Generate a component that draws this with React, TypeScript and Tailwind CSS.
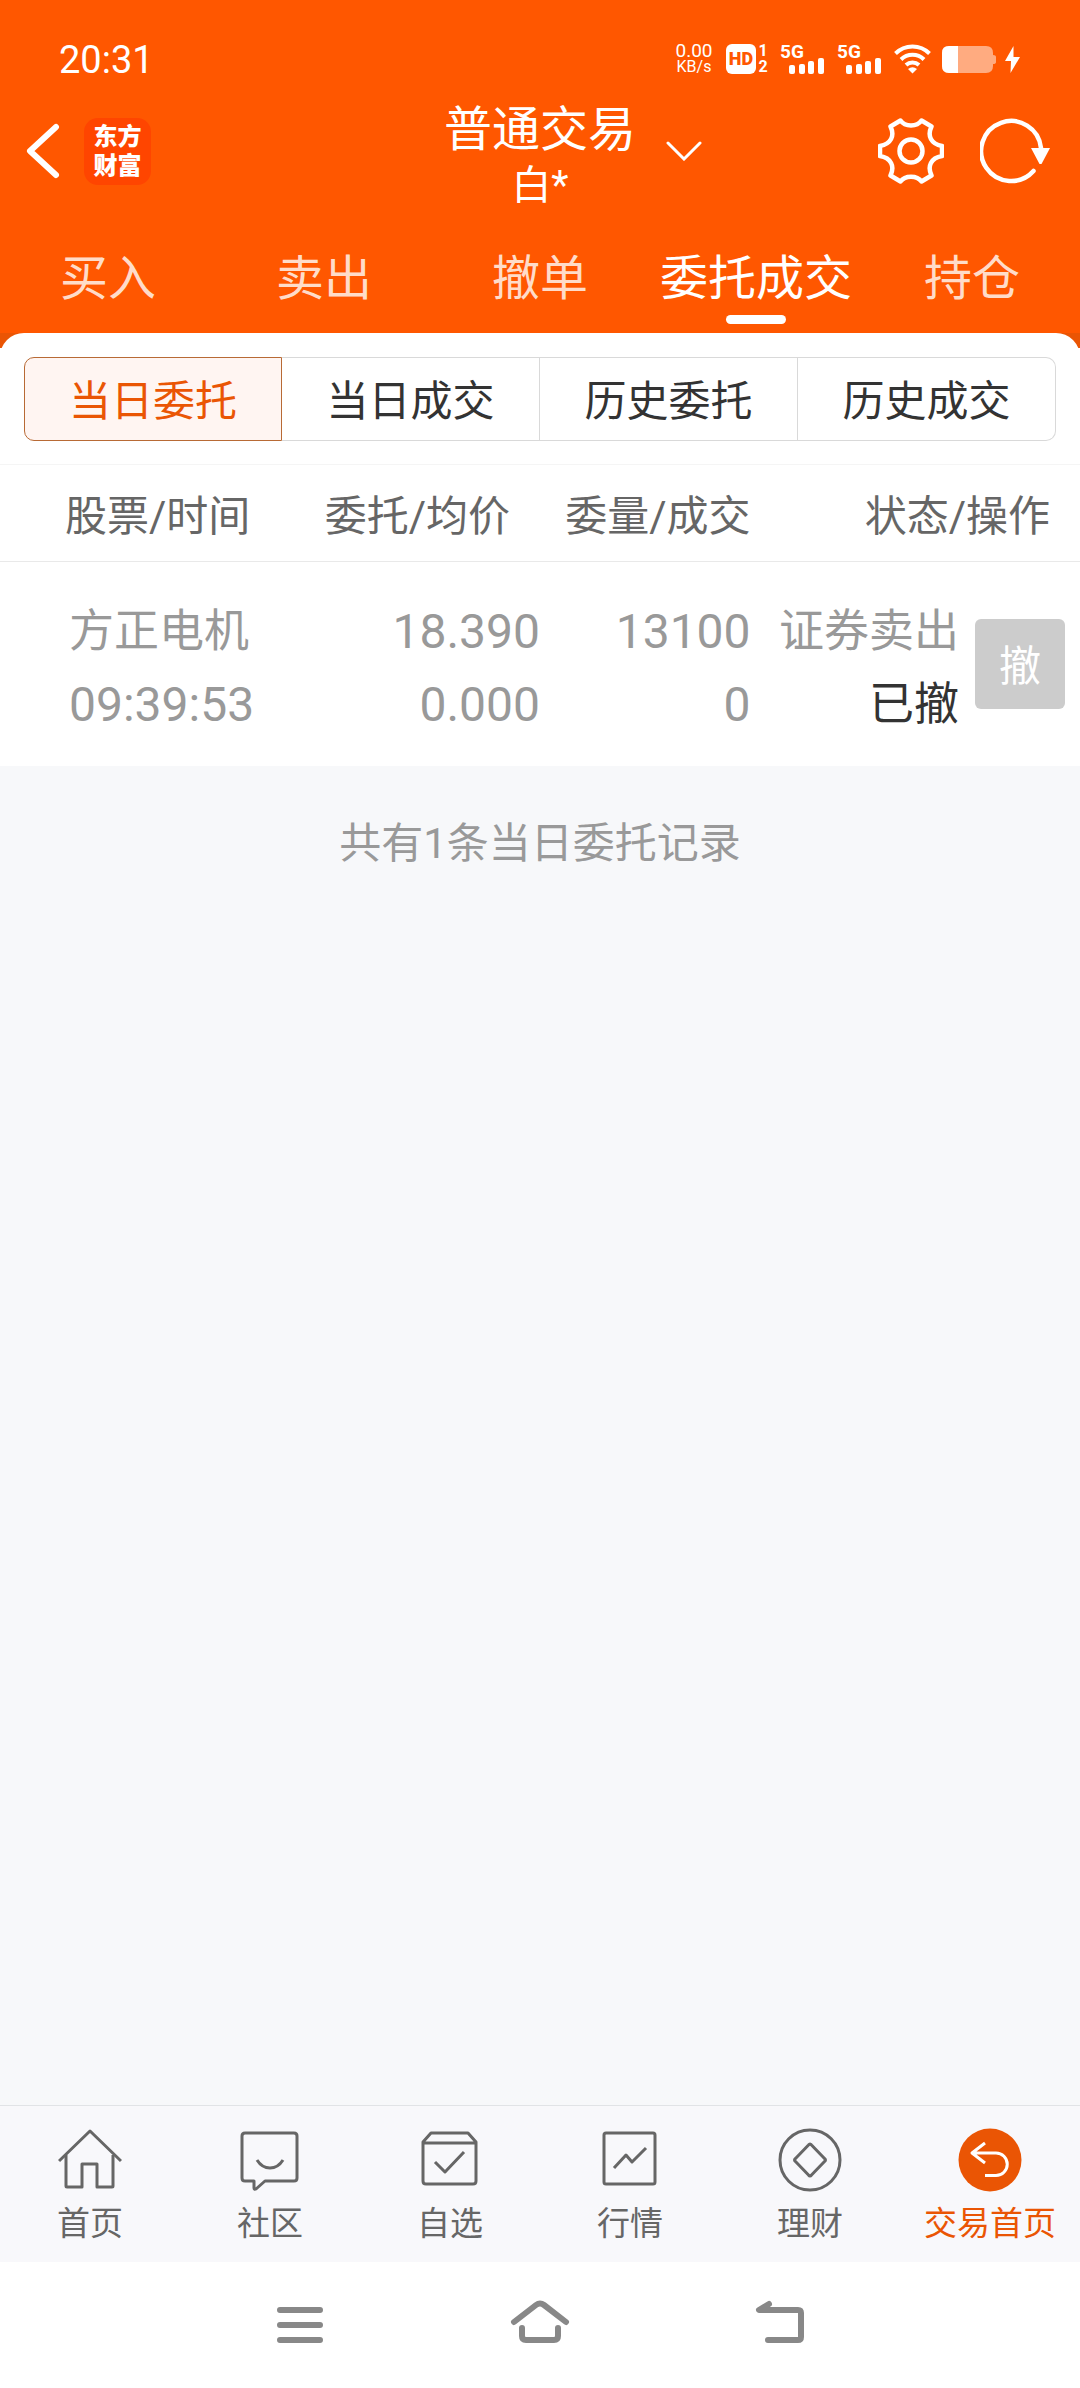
import React, { useState } from "react";
import clsx from "clsx";

interface NavItem {
  readonly label: string;
  readonly icon: React.ReactNode;
  readonly active?: boolean;
}

const TABS = ["买入", "卖出", "撤单", "委托成交", "持仓"];

const SEGMENTS = ["当日委托", "当日成交", "历史委托", "历史成交"];

const ORDERS = [
  {
    name: "方正电机",
    time: "09:39:53",
    price: "18.390",
    avg: "0.000",
    amount: "13100",
    filled: "0",
    side: "证券卖出",
    status: "已撤",
  },
];

const NAV_ITEMS: NavItem[] = [
  {
    label: "首页",
    icon: (
      <>
        <path d="M1 33 32 3l31 30" />
        <path d="M8 27v31q0 1 1 1h15V36h15v23h15q1 0 1-1V27" />
      </>
    ),
  },
  {
    label: "社区",
    icon: (
      <>
        <path d="M7 5h49q3 0 3 3v42q0 3-3 3H27l-9 8q-2 1-2-1v-7H7q-3 0-3-3V8q0-3 3-3z" />
        <path d="M19 32q5 8 13 8t13-8" />
      </>
    ),
  },
  {
    label: "自选",
    icon: (
      <>
        <path d="M5 14l8-9h37l8 9v39q0 3-3 3H8q-3 0-3-3zM5 15h53" />
        <path d="M17 34l10 10 19-20" />
      </>
    ),
  },
  {
    label: "行情",
    icon: (
      <>
        <rect x="6" y="5" width="51" height="51" rx="2" />
        <path d="M16 40l12-13 6 7 14-14" />
      </>
    ),
  },
  {
    label: "理财",
    icon: (
      <>
        <circle cx="32" cy="32" r="30" />
        <path d="M30.500 17q1.500-2 3 0l13 13.500q2 1.500 0 3l-13 13.500q-1.500 2-3 0l-13-13.500q-2-1.500 0-3z" />
      </>
    ),
  },
  {
    label: "交易首页",
    active: true,
    icon: (
      <>
        <circle cx="32" cy="32" r="31.500" fill="#ea5504" stroke="none" />
        <path
          d="M27 15 14 25l13 10M14 25h24a11 11 0 0 1 0 22.500H27"
          stroke="#fff"
          strokeLinecap="butt"
        />
      </>
    ),
  },
];

const Signal = () => (
  <div className="w-[45px] h-[30px] relative">
    <span className="block text-[19px] leading-4 font-bold">5G</span>
    <svg
      className="absolute right-0 bottom-0 w-9 h-4"
      viewBox="0 0 36 16"
      fill="currentColor"
      aria-hidden="true"
    >
      <rect x="0" y="7" width="6" height="9" rx="2" />
      <rect x="10" y="6" width="6" height="10" rx="2" />
      <rect x="19" y="3" width="6" height="13" rx="2" />
      <rect x="29" y="0" width="6" height="16" rx="2" />
    </svg>
  </div>
);

const StatusBar = () => (
  <div className="h-[99px] pt-[19px] pl-[59px] pr-[60px] flex items-center justify-between">
    <span className="pt-[2px] text-[38px] leading-10">20:31</span>
    <div className="flex items-center">
      <div className="w-10 flex flex-col items-center text-[19px] leading-4">
        <span>0.00</span>
        <span className="text-[16px]">KB/s</span>
      </div>
      <div className="ml-3 w-[30px] h-[30px] rounded-md bg-white text-[#ff5700] text-[18px] leading-[30px] font-black text-center">
        HD
      </div>
      <div className="ml-[2px] w-[10px] flex flex-col items-center text-[16px] leading-4 font-bold">
        <span>1</span>
        <span>2</span>
      </div>
      <div className="ml-3 flex gap-3">
        <Signal />
        <Signal />
      </div>
      <svg
        className="ml-3 w-[37px] h-[30px]"
        viewBox="0 0 37 30"
        fill="none"
        stroke="currentColor"
        strokeWidth="4"
        aria-hidden="true"
      >
        <path d="M1.500 9.500a24 24 0 0 1 34 0" />
        <path d="M7 15.500a16.500 16.500 0 0 1 23 0" />
        <path d="M12 21a9.500 9.500 0 0 1 13 0" />
        <path d="M18.500 29.500l-4.500-4.500q4.500-3.500 9 0z" fill="currentColor" stroke="none" />
      </svg>
      <svg className="ml-[11px] w-[54px] h-[27px]" viewBox="0 0 54 27" aria-hidden="true">
        <path
          d="M7 0h37q7 0 7 7v2q3 0 3 2v5q0 2-3 2v2q0 7-7 7H7q-7 0-7-7V7q0-7 7-7z"
          fill="#ffab80"
        />
        <path d="M16 0H7Q0 0 0 7v13q0 7 7 7h9z" fill="#fff" />
      </svg>
      <svg
        className="ml-[9px] w-[15px] h-[27px]"
        viewBox="0 0 15 27"
        fill="currentColor"
        aria-hidden="true"
      >
        <path d="M8.500 0 0 15h6l-.5 12L15 11H8.500z" />
      </svg>
    </div>
  </div>
);

const TitleBar = () => (
  <div className="grid grid-cols-[1fr_auto_1fr] items-start">
    <div className="h-[104px] pl-[26px] flex items-center">
      <button aria-label="返回">
        <svg
          className="w-[34px] h-[56px]"
          viewBox="0 0 34 56"
          fill="none"
          stroke="currentColor"
          strokeWidth="6"
          strokeLinecap="round"
          strokeLinejoin="round"
        >
          <path d="M30 4 4 28l26 24" />
        </svg>
      </button>
      <a
        href="#app"
        className="ml-6 w-[67px] h-[67px] pt-[2px] rounded-[14px] bg-[#ff4500] flex flex-col items-center justify-center text-2xl leading-[29px] font-black"
      >
        <span>东方</span>
        <span>财富</span>
      </a>
    </div>
    <div className="pt-1 flex flex-col items-center">
      <h1 className="text-[48px] leading-[54px]">普通交易</h1>
      <span className="text-[40px] leading-[58px]">白*</span>
    </div>
    <div className="h-[104px] pl-[30px] pr-[30px] flex items-center">
      <button aria-label="切换账户" className="mr-auto">
        <svg
          className="w-9 h-5"
          viewBox="0 0 36 20"
          fill="none"
          stroke="currentColor"
          strokeWidth="3"
          strokeLinecap="round"
        >
          <path d="M2 2l16 16L34 2" />
        </svg>
      </button>
      <button aria-label="设置">
        <svg
          className="w-[66px] h-[66px]"
          viewBox="-33 -33 66 66"
          fill="none"
          stroke="currentColor"
          strokeWidth="4.500"
          strokeLinejoin="round"
        >
          <path d="M10.500-30.500C6-24-6-24-10.500-30.500L-20.500-24.500C-16-15-20-7-31-5V5C-20 7-16 15-20.500 24.500L-10.500 30.500C-6 24 6 24 10.500 30.500L20.500 24.500C16 15 20 7 31 5V-5C20-7 16-15 20.500-24.500Z" />
          <circle r="11.500" />
        </svg>
      </button>
      <button aria-label="刷新" className="ml-9">
        <svg className="w-[70px] h-[66px]" viewBox="0 0 70 66" fill="none">
          <path
            d="M53.500 53A30 30 0 1 1 61 30"
            stroke="currentColor"
            strokeWidth="4.500"
            strokeLinecap="round"
          />
          <path d="M51 30h19L61.500 46h-2z" fill="currentColor" />
        </svg>
      </button>
    </div>
  </div>
);

const OrderTable = () => (
  <table className="w-full table-fixed border-t border-[#f5f5f5] bg-white border-collapse">
    <colgroup>
      <col className="w-[24%]" />
      <col className="w-[26%]" />
      <col className="w-[19.500%]" />
      <col />
    </colgroup>
    <thead>
      <tr className="h-[97px] border-b border-[#e9e9e9] text-[42px] leading-[60px] text-[#666] whitespace-nowrap">
        <th className="pt-2 pl-[65px] font-normal text-left">股票/时间</th>
        <th className="pt-2 pr-[30px] font-normal text-right">委托/均价</th>
        <th className="pt-2 font-normal text-right">委量/成交</th>
        <th className="pt-2 pr-[30px] font-normal text-right">状态/操作</th>
      </tr>
    </thead>
    <tbody>
      {ORDERS.map((order) => (
        <tr
          key={order.time}
          className="h-[204px] text-[48px] leading-[73px] text-[#999] text-right whitespace-nowrap"
        >
          <td className="pt-2 pl-[69px] text-left">
            <span className="block text-[45px]">{order.name}</span>
            <span className="block">{order.time}</span>
          </td>
          <td className="pt-2">
            <span className="block">{order.price}</span>
            <span className="block">{order.avg}</span>
          </td>
          <td className="pt-2">
            <span className="block">{order.amount}</span>
            <span className="block">{order.filled}</span>
          </td>
          <td className="pr-[15px]">
            <div className="flex items-center justify-end gap-4">
              <div className="pt-2 text-[45px]">
                <span className="block">{order.side}</span>
                <span className="block text-[#333]">{order.status}</span>
              </div>
              <button
                disabled
                className="pt-[6px] w-[90px] h-[90px] rounded-md bg-[#ccc] text-white text-[42px] leading-[60px]"
              >
                撤
              </button>
            </div>
          </td>
        </tr>
      ))}
    </tbody>
  </table>
);

const SystemNav = () => (
  <div className="h-[126px] bg-white flex items-center justify-center gap-[180px] text-[#888]">
    <button aria-label="最近任务">
      <svg className="w-[60px] h-[60px]" viewBox="0 0 60 60" fill="none" stroke="currentColor" strokeWidth="6" strokeLinecap="round">
        <path d="M10 15h40M10 30h40M10 45h40" />
      </svg>
    </button>
    <button aria-label="主屏幕">
      <svg className="w-[60px] h-[60px]" viewBox="0 0 60 60" fill="none" stroke="currentColor" strokeWidth="6" strokeLinecap="round" strokeLinejoin="round">
        <path d="M4 27 26 10q4-3 8 0l22 17" />
        <path d="M12 33v8q0 4 4 4h28q4 0 4-4v-8" />
      </svg>
    </button>
    <button aria-label="后退">
      <svg className="w-[60px] h-[60px]" viewBox="0 0 60 60" fill="none" stroke="currentColor" strokeWidth="6" strokeLinecap="round" strokeLinejoin="round">
        <path d="M19 9 9 15h39q3 0 3 3v24q0 3-3 3H18" />
      </svg>
    </button>
  </div>
);

export default function App() {
  const [tab, setTab] = useState("委托成交");
  const [segment, setSegment] = useState("当日委托");

  return (
    <div className="min-h-screen flex flex-col bg-[#f7f8fa] font-[Roboto,'Noto_Sans_CJK_SC',sans-serif]">
      <header className="bg-[#ff5700] text-white">
        <StatusBar />
        <TitleBar />
        <nav className="grid grid-cols-5">
          {TABS.map((name) => (
            <button
              key={name}
              onClick={() => setTab(name)}
              className={clsx(
                "pt-[34px] pb-[9px] flex flex-col items-center gap-[6px] text-[48px] leading-[60px]",
                tab === name ? "text-white" : "text-[#ffdcc9]"
              )}
            >
              {name}
              <span
                className={clsx(
                  "w-[60px] h-[9px] rounded-full",
                  tab === name && "bg-white"
                )}
              />
            </button>
          ))}
        </nav>
      </header>

      <main className="flex-1">
        <div className="bg-[#ea5504] h-[15px] overflow-hidden">
          <div className="h-12 bg-white rounded-t-[24px]" />
        </div>
        <div className="bg-white px-6 pt-[9px] pb-[23px] grid grid-cols-4">
          {SEGMENTS.map((name) => (
            <button
              key={name}
              onClick={() => setSegment(name)}
              className={clsx(
                "h-[84px] pt-[6px] border text-[42px] leading-[60px] first:rounded-l-[10px] last:rounded-r-[10px]",
                segment === name
                  ? "border-[#b86a35] bg-[#fff5f2] text-[#ea5504]"
                  : "border-[#d9d9d9] border-l-0 text-[#333]"
              )}
            >
              {name}
            </button>
          ))}
        </div>
        <OrderTable />
        <p className="mt-12 text-center text-[42px] leading-[60px] text-[#999]">
          共有{ORDERS.length}条当日委托记录
        </p>
      </main>

      <footer>
        <nav className="border-t border-[#e1e3e6] bg-[#f8f8fb] grid grid-cols-6">
          {NAV_ITEMS.map(({ label, icon, active }) => (
            <a
              key={label}
              href="#nav"
              className={clsx(
                "pt-[22px] pb-[18px] flex flex-col items-center gap-3 text-[33px] leading-10 whitespace-nowrap",
                active ? "text-[#ea5504]" : "text-[#666]"
              )}
            >
              <svg
                className="w-16 h-16"
                viewBox="0 0 64 64"
                fill="none"
                stroke="#666"
                strokeWidth="3"
                strokeLinejoin="round"
                aria-hidden="true"
              >
                {icon}
              </svg>
              {label}
            </a>
          ))}
        </nav>
        <SystemNav />
      </footer>
    </div>
  );
}
